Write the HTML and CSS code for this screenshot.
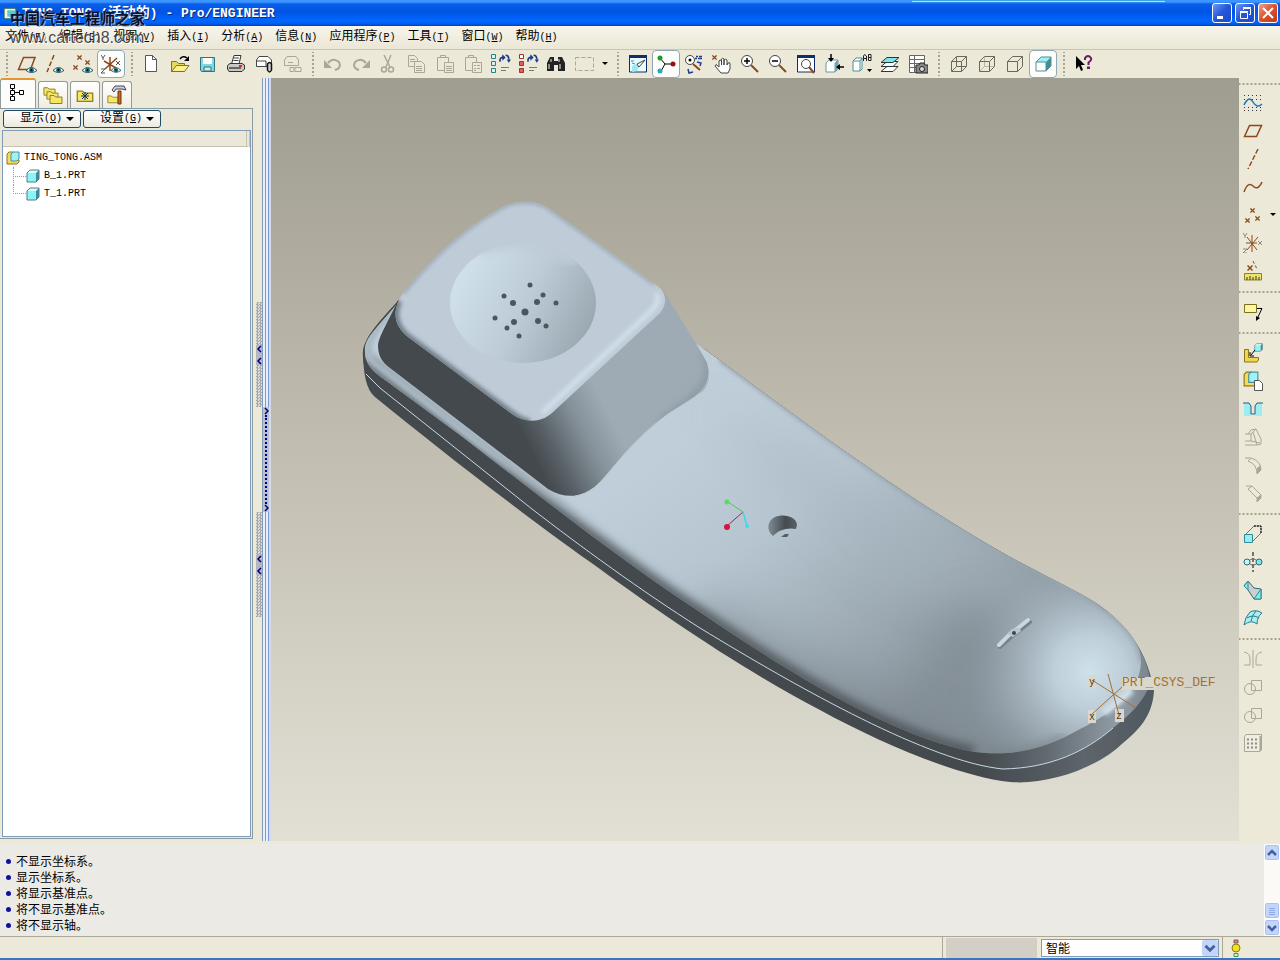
FILE: index.html
```html
<!DOCTYPE html>
<html lang="zh-CN">
<head>
    <meta charset="UTF-8">
    <meta name="viewport" content="width=device-width, initial-scale=1.0">
    <title>TING_TONG (活动的) - Pro/ENGINEER</title>
    <link rel="stylesheet" href="styles.css">
</head>
<body>
    <!-- shared icon parts -->
    <svg class="defs" width="0" height="0" aria-hidden="true">
        <symbol id="eye" viewBox="0 0 12 8"><path d="M0 4.500Q6-2 12 4.500Q6 9 0 4.500Z" fill="#f4f4ee" stroke="#1c4a55"/><circle cx="6" cy="4.200" r="2.600" fill="#167080"/><circle cx="6" cy="4" r="1" fill="#000"/></symbol>
        <symbol id="x" viewBox="0 0 6 6"><path d="M0.500 0.500L5.500 5.500M5.500 0.500L0.500 5.500" stroke="#8b4a1c" stroke-width="1.500"/></symbol>
        <symbol id="cube" viewBox="0 0 14 14"><path d="M1 4L4 1H13L10 4Z" fill="#d8ffff"/><path d="M10 4L13 1V10L10 13Z" fill="#3a8f9a"/><rect x="1" y="4" width="9" height="9" fill="#8ef4f8"/><path d="M1 4L4 1H13V10L10 13H1Z" fill="none" stroke="#4c7f8c"/></symbol>
        <symbol id="asm" viewBox="0 0 14 14"><path d="M1 3L3 1H7V9H13V11L11 13H1Z" fill="#f3dc5c" stroke="#8b7420"/><path d="M5 3L7 1H13V8L11 10H5Z" fill="#9df3f6" stroke="#4c8f9a"/></symbol>
        <symbol id="wire" viewBox="0 0 20 20"><path d="M2.500 7.500H12.500V17.500H2.500ZM2.500 7.500L7.500 2.500H17.500V12.500L12.500 17.500M12.500 7.500L17.500 2.500" fill="none" stroke="#6a675e"/></symbol>
        <symbol id="swap" viewBox="0 0 12 9"><path d="M2 7Q1 3 5 3M7 1Q10 1 10 5" fill="none" stroke="#173b80" stroke-width="1.500"/><path d="M4 0L7 3L4 6ZM8 5H12L10 8Z" fill="#173b80"/></symbol>
        <symbol id="folder" viewBox="0 0 14 11"><path d="M1 2.500H5L6.500 4H13V10.500H1Z" fill="#f5e66a" stroke="#8f7e25"/></symbol>
        <symbol id="clip" viewBox="0 0 20 20"><path d="M2.500 3.500H13.500V16.500H2.500ZM5.500 3.500V1.500H10.500V3.500" fill="none" stroke="#aaa799"/><path d="M9.500 8.500H18.500V18.500H9.500Z" fill="#ece9d8" stroke="#aaa799"/></symbol>
        <symbol id="bool" viewBox="0 0 20 20"><circle cx="7" cy="12" r="5.500" fill="none" stroke="#aaa799"/><path d="M8.500 3.500H18.500V13.500H8.500Z" fill="none" stroke="#aaa799"/></symbol>
    </svg>

    <header class="titlebar">
        <i class="edge-strip"></i>
        <svg class="app-icon" viewBox="0 0 14 14"><path d="M1 2H12V12H1Z" fill="#f4f4ec" stroke="#2c6a50"/><path d="M4 4H12V10H4Z" fill="#5ac8cc"/></svg>
        <h1><span class="lat">TING_TONG (</span>活动的<span class="lat">) - Pro/ENGINEER</span></h1>
        <div class="win-buttons">
            <button aria-label="最小化"><svg viewBox="0 0 18 18"><path d="M4 12H10V15H4Z" fill="#fff"/></svg></button>
            <button aria-label="还原"><svg viewBox="0 0 18 18" fill="none" stroke="#fff"><path d="M4 8.500H11.500V14.500H4.500V8M4 7.500H12M7.500 6V4.500H14.500V10.500H13M7 3.500H15"/></svg></button>
            <button class="close" aria-label="关闭"><svg viewBox="0 0 18 18"><path d="M4 4L14 14M14 4L4 14" stroke="#fff" stroke-width="2"/></svg></button>
        </div>
    </header>

    <div class="watermark">
        <p class="wm-name">中国汽车工程师之家</p>
        <p class="wm-url">www.cartech8.com</p>
    </div>

    <nav class="menubar">
        <a href="#">文件<span>(<u>F</u>)</span></a>
        <a href="#">编辑<span>(<u>E</u>)</span></a>
        <a href="#">视图<span>(<u>V</u>)</span></a>
        <a href="#">插入<span>(<u>I</u>)</span></a>
        <a href="#">分析<span>(<u>A</u>)</span></a>
        <a href="#">信息<span>(<u>N</u>)</span></a>
        <a href="#">应用程序<span>(<u>P</u>)</span></a>
        <a href="#">工具<span>(<u>T</u>)</span></a>
        <a href="#">窗口<span>(<u>W</u>)</span></a>
        <a href="#">帮助<span>(<u>H</u>)</span></a>
    </nav>

    <div class="toolbar">
        <i class="grip"></i>
        <button class="tool" aria-label="基准平面显示"><svg viewBox="0 0 20 20"><path d="M1.500 15.500L6.500 3.500H18L13.500 15.500Z" fill="none" stroke="#8b4a1c" stroke-width="1.500"/><use href="#eye" x="9" y="12" width="11" height="8"/></svg></button>
        <button class="tool" aria-label="基准轴显示"><svg viewBox="0 0 20 20"><path d="M9 1L2 18" stroke="#8b4a1c" stroke-width="1.500" stroke-dasharray="5 2"/><use href="#eye" x="8" y="12" width="11" height="8"/></svg></button>
        <button class="tool" aria-label="基准点显示"><svg viewBox="0 0 20 20"><use href="#x" x="4" y="1" width="5" height="5"/><use href="#x" x="0" y="11" width="5" height="5"/><use href="#x" x="12" y="6" width="5" height="5"/><use href="#eye" x="9" y="12" width="11" height="8"/></svg></button>
        <button class="tool on" aria-label="坐标系显示"><svg viewBox="0 0 20 20"><path d="M3 7L15 14M4 15L16 4M9 3V17" stroke="#8b4a1c" stroke-width="1.500"/><path d="M0 1L2 4L4 1M2 4V6M15 7L19 11M19 7L15 11M0 15H4L0 19H4" fill="none" stroke="#555"/><use href="#eye" x="10" y="12" width="10" height="8"/></svg></button>
        <i class="grip"></i>
        <button class="tool" aria-label="新建"><svg viewBox="0 0 20 20"><path d="M3.500 1.500H10.500L14.500 5.500V17.500H3.500Z" fill="#fff" stroke="#555"/><path d="M10.500 1.500V5.500H14.500" fill="none" stroke="#555"/></svg></button>
        <button class="tool" aria-label="打开"><svg viewBox="0 0 20 20"><path d="M1.500 17.500V7.500H6.500L8.500 9.500H14.500V17.500Z" fill="#e8d860" stroke="#7d7327"/><path d="M1.500 17.500L6.500 11.500H19L14.500 17.500Z" fill="#fbf28c" stroke="#7d7327"/><path d="M10 5Q13 1 17 4" fill="none" stroke="#000" stroke-width="1.500"/><path d="M19 2V7H14Z"/></svg></button>
        <button class="tool" aria-label="保存"><svg viewBox="0 0 20 20"><path d="M2.500 3.500H16.500V17.500H3.500L2.500 16Z" fill="#7adce2" stroke="#33737b"/><path d="M5 4H14V10H5Z" fill="#fff"/><path d="M6 13H13V17H6Z" fill="#d8e8e8" stroke="#33737b"/></svg></button>
        <button class="tool" aria-label="打印"><svg viewBox="0 0 20 20"><path d="M5.500 10L8 1.500H15L13 10Z" fill="#fff" stroke="#333"/><path d="M8 4H13M7.500 6.500H12.500" stroke="#444"/><path d="M1.500 11.500L4 9.500H16L18.500 11V15L16 17.500H3L1.500 15Z" fill="#c9c9c4" stroke="#333"/><path d="M3 14H15" stroke="#444" stroke-width="1.500"/><path d="M13 11H16V13H13Z" fill="#f02020"/></svg></button>
        <button class="tool" aria-label="附件发送"><svg viewBox="0 0 20 20"><path d="M2.500 12.500V6L5 2.500H14L17.500 6V12.500Z" fill="#fff" stroke="#444"/><path d="M3 7H12V12" fill="none" stroke="#444"/><path d="M13.500 16V10Q15.500 7 17.500 10V16Q15.500 20 13.500 16Z" fill="#ccc" stroke="#111" stroke-width="1.500"/></svg></button>
        <button class="tool" aria-label="链接发送"><svg viewBox="0 0 20 20" fill="none" stroke="#aaa799"><path d="M2.500 11.500V6L5 2.500H14L16.500 6V11.500H2.500M6 8.500H11M8 13.500H12V17.500H8ZM13 13.500H19V17.500H13Z"/></svg></button>
        <i class="grip"></i>
        <button class="tool" aria-label="撤消"><svg viewBox="0 0 20 20"><path d="M5 9Q10 3 16 8Q19 14 12 16" fill="none" stroke="#aaa799" stroke-width="2"/><path d="M1 6V14H9Z" fill="#aaa799"/></svg></button>
        <button class="tool" aria-label="重做"><svg viewBox="0 0 20 20"><path d="M15 9Q10 3 4 8Q1 14 8 16" fill="none" stroke="#aaa799" stroke-width="2"/><path d="M19 6V14H11Z" fill="#aaa799"/></svg></button>
        <button class="tool" aria-label="剪切"><svg viewBox="0 0 20 20" fill="none" stroke="#aaa799" stroke-width="1.500"><path d="M5 1L11 13M12 1L7 13"/><circle cx="5" cy="15.500" r="2.500"/><circle cx="12" cy="15.500" r="2.500"/></svg></button>
        <button class="tool" aria-label="复制"><svg viewBox="0 0 20 20" fill="#ece9d8" stroke="#aaa799"><path d="M1.500 1.500H7.500L10.500 4.500V12.500H1.500ZM3 5.500H8M3 7.500H8"/><path d="M7.500 7.500H14.500L17.500 10.500V18.500H7.500ZM9 12.500H15M9 14.500H15M9 16.500H15"/></svg></button>
        <button class="tool" aria-label="粘贴"><svg viewBox="0 0 20 20"><use href="#clip" width="20" height="20"/><path d="M11 12.500H17M11 14.500H17M11 16.500H17" stroke="#aaa799"/></svg></button>
        <button class="tool" aria-label="选择性粘贴"><svg viewBox="0 0 20 20"><use href="#clip" width="20" height="20"/><path d="M11 11.500H13M14 11.500H17M11 14.500H13M14 14.500H17M11 16.500H13" stroke="#aaa799"/></svg></button>
        <button class="tool" aria-label="再生"><svg viewBox="0 0 20 20"><g fill="#d6f4f4" stroke="#2c7f7f"><path d="M0.500 0.500H4.500V4.500H0.500ZM0.500 7.500H4.500V11.500H0.500ZM0.500 14.500H4.500V18.500H0.500Z"/></g><use href="#swap" x="7" y="0" width="13" height="10"/><path d="M10 13.500H18M10 16.500H15" stroke="#777"/></svg></button>
        <button class="tool" aria-label="再生管理器"><svg viewBox="0 0 20 20"><g fill="#e95a5a" stroke="#9a3434"><path d="M0.500 0.500H4.500V4.500H0.500Z" fill="#fff"/><path d="M0.500 7.500H4.500V11.500H0.500ZM0.500 14.500H4.500V18.500H0.500Z"/></g><use href="#swap" x="7" y="0" width="13" height="10"/><path d="M10 13.500H18M10 16.500H15" stroke="#777"/></svg></button>
        <button class="tool" aria-label="查找"><svg viewBox="0 0 20 20"><path d="M0 17V9L3 3H7V7H11V3H15L18 9V17H11V11H7V17Z" fill="#222"/><path d="M2 10V15M13 10V15M4 5V8M12 5V8" stroke="#aaa" stroke-width="1.500"/></svg></button>
        <button class="tool" aria-label="选取框"><svg viewBox="0 0 20 20"><path d="M0.500 3.500H18.500V16.500H0.500Z" fill="none" stroke="#aaa799" stroke-dasharray="4 2"/></svg></button>
        <button class="drop" aria-label="选取方式"><i class="arrow"></i></button>
        <i class="grip"></i>
        <button class="tool" aria-label="重画"><svg viewBox="0 0 20 20"><path d="M1.500 2H18.500V18H1.500Z" fill="#e8fbff" stroke="#102e6b"/><path d="M1 1H19V4H1Z" fill="#102e6b"/><path d="M4 12L9 10L11 13L9 17L4 18Z" fill="#9de8f0"/><path d="M9 10L17 6L11 13Z" fill="#fff" stroke="#444"/><path d="M4 9L7 10M3 7L6 7" stroke="#3a8fd0"/></svg></button>
        <button class="tool on" aria-label="旋转中心"><svg viewBox="0 0 20 20"><path d="M4 4L9 10H17M9 10L5 17" fill="none" stroke="#000"/><circle cx="4" cy="4" r="2.500" fill="#1c9a2e"/><circle cx="17" cy="10" r="2.500" fill="#8e1515"/><circle cx="4" cy="17" r="2.500" fill="#28a8c0"/></svg></button>
        <button class="tool" aria-label="定向模式"><svg viewBox="0 0 20 20"><circle cx="6" cy="6" r="4.500" fill="#fff" stroke="#444"/><path d="M9 10L16 16" stroke="#8b4a1c" stroke-width="2"/><circle cx="6" cy="6" r="1.500"/><path d="M12 2.500H14M15 2.500H18M11 4.500H13M14 4.500H18M13 8L17 9L16 12M4 15L5 19L9 18" fill="none" stroke="#1e3f94" stroke-width="1.500"/></svg></button>
        <button class="tool" aria-label="平移"><svg viewBox="0 0 20 20"><use href="#x" x="0" y="1" width="5" height="5"/><path d="M9 19L3 12L4 10.500L7 13V7Q8 5 9.500 7V11V5Q10.500 3.500 12 5V11V6Q13.500 4.500 15 6V11L16 9Q18 8 18 10V15L16 19Z" fill="#fff" stroke="#444"/></svg></button>
        <button class="tool" aria-label="放大"><svg viewBox="0 0 20 20"><path d="M11 11L18 18" stroke="#8b4a1c" stroke-width="2"/><circle cx="7" cy="7" r="5.500" fill="#fff" stroke="#444"/><path d="M4 7H10M7 4V10" stroke="#000" stroke-width="1.500"/></svg></button>
        <button class="tool" aria-label="缩小"><svg viewBox="0 0 20 20"><path d="M11 11L18 18" stroke="#8b4a1c" stroke-width="2"/><circle cx="7" cy="7" r="5.500" fill="#fff" stroke="#444"/><path d="M4 7H10" stroke="#000" stroke-width="1.500"/></svg></button>
        <button class="tool" aria-label="重新调整"><svg viewBox="0 0 20 20"><path d="M1.500 2H18.500V18H1.500Z" fill="#fff" stroke="#102e6b"/><path d="M1 1H19V4H1Z" fill="#102e6b"/><circle cx="10" cy="10" r="4.500" fill="#fff" stroke="#444"/><path d="M13 13L18 19" stroke="#8b4a1c" stroke-width="2"/></svg></button>
        <button class="tool" aria-label="重定向"><svg viewBox="0 0 20 20"><path d="M2 9L5 6H14L11 9V18H2ZM11 18L14 15V6" fill="#fff" stroke="#6a9aa2"/><path d="M11 9L14 6V15L11 18Z" fill="#5fb0b8"/><path d="M7 0V5M20 13H15" stroke="#000" stroke-width="1.500"/><path d="M4 4H10L7 8ZM16 10V16L12 13Z"/></svg></button>
        <button class="tool" aria-label="保存的视图列表"><svg viewBox="0 0 20 20"><path d="M1 7L4 4H10V15L8 17H1ZM8 17V7L10 4M1 7H8" fill="#fff" stroke="#4c8f9a"/><path d="M11.500 7V2L12.500 0.500L14.500 2V7M11.500 4.500H14.500M16.500 0.500V6.500H19V0.500H16.500M16.500 3.500H19" fill="none" stroke="#222"/><path d="M15 15H20L17.500 18Z"/></svg></button>
        <button class="tool" aria-label="层"><svg viewBox="0 0 20 20" stroke="#333"><path d="M1 17.500L7 12.500H18L13 17.500Z" fill="#fff"/><path d="M1 12.500L7 7.500H18L13 12.500Z" fill="#e8ffff"/><path d="M1 8.500L7 3.500H19L13 8.500Z" fill="#7ce8ee"/></svg></button>
        <button class="tool" aria-label="视图管理器"><svg viewBox="0 0 20 20"><path d="M1.500 1.500H16.500V18.500H1.500ZM6.500 1V19M1 5.500H17M1 9.500H17M1 13.500H8" fill="#fff" stroke="#666"/><path d="M8 11H11L12 9H16L17 11H20V19H8Z" fill="#888" stroke="#222"/><circle cx="14" cy="15" r="2.500" fill="#ddd" stroke="#222"/></svg></button>
        <i class="grip"></i>
        <button class="tool" aria-label="线框"><svg viewBox="0 0 20 20"><use href="#wire" width="20" height="20"/><path d="M7.500 3V12.500H17M7.500 12.500L3 17" fill="none" stroke="#6a675e"/></svg></button>
        <button class="tool" aria-label="隐藏线"><svg viewBox="0 0 20 20"><path d="M7.500 3V12.500H17M7.500 12.500L3 17" fill="none" stroke="#b9b6a8"/><use href="#wire" width="20" height="20"/></svg></button>
        <button class="tool" aria-label="无隐藏线"><svg viewBox="0 0 20 20"><use href="#wire" width="20" height="20"/></svg></button>
        <button class="tool on" aria-label="着色"><svg viewBox="0 0 20 20"><path d="M3 8L8 3H18L13 8Z" fill="#9ff0f2"/><path d="M13 8L18 3V12L13 17Z" fill="#3f8f97"/><path d="M3 8H13V17H3ZM3 8L8 3H18V12L13 17" fill="none" stroke="#568d96"/></svg></button>
        <i class="grip"></i>
        <button class="tool" aria-label="帮助"><svg viewBox="0 0 20 20"><path d="M2 2V15L5 12L7 17L9 16L7 11H11Z"/><path d="M11 6V4Q14 0 17 4Q18 6 14.500 8.500V11" fill="none" stroke="#6b1b66" stroke-width="2"/><path d="M13 12.500H16V15H13Z" fill="#6b1b66"/></svg></button>
    </div>

    <main class="workspace">
        <aside class="navigator">
            <div class="tabs">
                <button class="tab active" aria-label="模型树"><svg viewBox="0 0 20 20" fill="#fff" stroke="#000"><path d="M4.500 4V15M4.500 8.500H12"/><path d="M2.500 0.500H6.500V4.500H2.500ZM2.500 6.500H6.500V10.500H2.500ZM2.500 12.500H6.500V16.500H2.500ZM11.500 6.500H15.500V10.500H11.500Z"/></svg></button>
                <button class="tab" aria-label="文件夹浏览器"><svg viewBox="0 0 20 20"><use href="#folder" x="0" y="0" width="13" height="11"/><use href="#folder" x="3" y="4" width="13" height="11"/><use href="#folder" x="6" y="8" width="14" height="11"/></svg></button>
                <button class="tab" aria-label="收藏夹"><svg viewBox="0 0 20 20"><use href="#folder" x="1" y="2" width="18" height="16"/><path d="M10 7V15M6 11H14M7 8L13 14M13 8L7 14" stroke="#102e6b"/></svg></button>
                <button class="tab" aria-label="连接"><svg viewBox="0 0 20 20"><use href="#folder" x="0" y="8" width="12" height="11"/><path d="M5 5L8 1H17L19 5L15 4H9L7 7Z" fill="#c8d4dc" stroke="#445"/><path d="M11 6H14V19H11Z" fill="#c96a24" stroke="#6b3510"/></svg></button>
            </div>
            <div class="pane">
                <div class="pane-actions">
                    <button class="menu-btn">显示<span>(<u>O</u>)</span><i class="arrow"></i></button>
                    <button class="menu-btn">设置<span>(<u>G</u>)</span><i class="arrow"></i></button>
                </div>
                <div class="tree-box">
                    <div class="tree-head"></div>
                    <ul class="tree">
                        <li><svg viewBox="0 0 14 14"><use href="#asm"/></svg>TING_TONG.ASM</li>
                        <li class="child"><svg viewBox="0 0 14 14"><use href="#cube"/></svg>B_1.PRT</li>
                        <li class="child"><svg viewBox="0 0 14 14"><use href="#cube"/></svg>T_1.PRT</li>
                    </ul>
                </div>
            </div>
        </aside>

        <div class="sash">
            <div class="sash-left">
                <div class="sash-grip"><svg viewBox="0 0 6 20"><path d="M5 1L2 4L5 7M5 13L2 16L5 19" fill="none" stroke="#000080" stroke-width="1.500"/></svg></div>
                <div class="sash-grip"><svg viewBox="0 0 6 20"><path d="M5 1L2 4L5 7M5 13L2 16L5 19" fill="none" stroke="#000080" stroke-width="1.500"/></svg></div>
            </div>
            <div class="sash-right">
                <div class="sash-mid">
                    <svg viewBox="0 0 5 8"><path d="M1 1L4 4L1 7" fill="none" stroke="#000080" stroke-width="1.500"/></svg>
                    <i></i>
                    <svg viewBox="0 0 5 8"><path d="M1 1L4 4L1 7" fill="none" stroke="#000080" stroke-width="1.500"/></svg>
                </div>
            </div>
        </div>

        <section class="viewport">
            <svg class="model" viewBox="271 78 968 763" role="img" aria-label="TING_TONG">
                <defs>
                    <clipPath id="topClip"><path d="M365 352C364 340 372 333 398 303L520 240L703 348C760 390 812 429 872 470C920 503 965 532 1010 557L1079 593C1112 612 1141 636 1141 662C1139 700 1103 717 1065 737C1035 751 1008 756 975 752C900 738 810 687 700 612C620 560 540 496 460 435L385 380C370 370 365 362 365 352Z"/></clipPath>
                    <clipPath id="sideClip"><path d="M398 300C392 315 379 335 378 345C378 356 382 362 390 368L548 489C566 500 584 497 597 485C610 472 625 450 650 428C668 412 688 402 700 393C708 387 711 378 707 363C700 348 678 316 664 291L530 380Z"/></clipPath>
                    <clipPath id="capClip"><path d="M497 210C512 200 533 199 547 207L655 284C667 292 668 303 660 313L552 413C541 423 525 423 512 414L408 337C394 326 391 311 403 293C432 257 463 229 497 210Z"/></clipPath>
                    <linearGradient id="rim" gradientUnits="userSpaceOnUse" x1="980" y1="0" x2="1154" y2="0"><stop offset="0" stop-color="#43494d"/><stop offset="0.400" stop-color="#646c72"/><stop offset="0.800" stop-color="#929da6"/><stop offset="1" stop-color="#76818a"/></linearGradient>
                    <linearGradient id="lower" gradientUnits="userSpaceOnUse" x1="980" y1="0" x2="1154" y2="0"><stop offset="0" stop-color="#43494d"/><stop offset="0.600" stop-color="#5d646a"/><stop offset="1" stop-color="#505960"/></linearGradient>
                    <linearGradient id="body" gradientUnits="userSpaceOnUse" x1="740" y1="400" x2="940" y2="680"><stop offset="0" stop-color="#bfced9"/><stop offset="0.350" stop-color="#b6c5d0"/><stop offset="0.700" stop-color="#a0adb6"/><stop offset="1" stop-color="#8b969e"/></linearGradient>
                    <radialGradient id="tip" gradientUnits="userSpaceOnUse" cx="1090" cy="672" r="125"><stop offset="0" stop-color="#cfe1eb"/><stop offset="0.300" stop-color="#c0d1dc" stop-opacity="0.950"/><stop offset="0.650" stop-color="#a6b4be" stop-opacity="0.600"/><stop offset="1" stop-color="#8e9ba5" stop-opacity="0"/></radialGradient>
                    <linearGradient id="fillet" gradientUnits="userSpaceOnUse" x1="480" y1="440" x2="610" y2="540"><stop offset="0" stop-color="#a9b8c2"/><stop offset="1" stop-color="#b4c3ce" stop-opacity="0"/></linearGradient>
                    <linearGradient id="flank" gradientUnits="userSpaceOnUse" x1="532" y1="455" x2="610" y2="415"><stop offset="0" stop-color="#43494d"/><stop offset="0.250" stop-color="#596167"/><stop offset="0.650" stop-color="#86929a"/><stop offset="1" stop-color="#9eabb5"/></linearGradient>
                    <linearGradient id="dish" gradientUnits="userSpaceOnUse" x1="470" y1="265" x2="590" y2="325"><stop offset="0" stop-color="#cfdfe9"/><stop offset="0.500" stop-color="#bccbd5"/><stop offset="1" stop-color="#9ba9b3"/></linearGradient>
                    <linearGradient id="hole" x1="0" x2="1" y1="0" y2="0"><stop offset="0" stop-color="#7e8a92"/><stop offset="0.600" stop-color="#454c51"/><stop offset="1" stop-color="#596167"/></linearGradient>
                    <filter id="b2" x="-20%" y="-20%" width="140%" height="140%"><feGaussianBlur stdDeviation="2"/></filter>
                    <filter id="b5" x="-20%" y="-20%" width="140%" height="140%"><feGaussianBlur stdDeviation="5"/></filter>
                    <filter id="b20" x="-100%" y="-100%" width="300%" height="300%"><feGaussianBlur stdDeviation="20"/></filter>
                </defs>

                <!-- lower shell -->
                <path d="M363 357C362 343 370 331 398 301L703 348C760 390 812 429 872 470C920 503 965 532 1010 557L1079 593C1120 615 1145 643 1154 690C1153 712 1143 727 1123 743C1095 770 1045 785 1010 782C960 777 880 743 820 710C740 668 660 613 600 569C530 520 440 450 375 397C366 389 364 375 363 357Z" fill="url(#lower)"/>
                <!-- upper shell side -->
                <path d="M363 357C362 343 370 331 398 301L703 348C760 390 812 429 872 470C920 503 965 532 1010 557L1079 593C1120 615 1143 643 1150 678C1152 690 1135 712 1113 728C1085 752 1050 768 1003 769C930 762 800 689 700 628C640 590 580 546 532 509L380 388C367 378 364 370 363 357Z" fill="url(#rim)"/>
                <g clip-path="url(#topClip)">
                    <path d="M355 290H1200V800H355Z" fill="url(#body)"/>
                    <path d="M700 400L1000 560L1120 620L1070 650L880 580Z" fill="#a6b4be" opacity="0.400" filter="url(#b20)"/>
                    <ellipse cx="955" cy="680" rx="35" ry="85" transform="rotate(20 955 680)" fill="#828d95" opacity="0.600" filter="url(#b20)"/>
                    <path d="M700 612C810 687 900 738 975 752C1008 756 1035 751 1060 740" fill="none" stroke="#6e787f" stroke-width="30" opacity="0.500" filter="url(#b20)"/>
                    <ellipse cx="1085" cy="670" rx="125" ry="110" fill="url(#tip)"/>
                    <path d="M365 360L460 435C540 496 620 560 700 612C810 687 900 738 975 752" fill="none" stroke="#50575c" stroke-width="11" filter="url(#b5)"/>
                    <path d="M975 752C1008 756 1035 751 1065 737" fill="none" stroke="#77828a" stroke-width="5" filter="url(#b5)"/>
                    <path d="M1079 593C1112 612 1141 636 1141 662" fill="none" stroke="#97a5ae" stroke-width="4" filter="url(#b2)"/>
                    <path d="M720 360C812 429 872 470 920 503L1079 593" fill="none" stroke="#98a6b0" stroke-width="4" filter="url(#b2)"/>
                    <path d="M396 305C370 334 360 350 374 363L460 429Q520 475 560 503L610 538" fill="none" stroke="url(#fillet)" stroke-width="8" filter="url(#b2)"/>
                </g>
                <path d="M1104 713L1132 690" stroke="#cfe0ea" stroke-width="7" filter="url(#b2)"/>
                <path d="M366 374L380 388L532 509C580 546 640 590 700 628C800 689 930 762 1003 769C1050 768 1085 752 1113 728" fill="none" stroke="#c9d8e2"/>

                <!-- earpiece block -->
                <g clip-path="url(#sideClip)">
                    <path d="M370 280H720V510H370Z" fill="url(#flank)"/>
                    <path d="M705 350C717 380 705 393 660 423" fill="none" stroke="#84919a" stroke-width="6" filter="url(#b5)"/>
                </g>
                <path d="M572 497C590 494 600 484 612 469C630 446 650 428 668 414C690 400 708 392 709 374" fill="none" stroke="#b9c8d2"/>
                <g clip-path="url(#capClip)">
                    <path d="M380 190H680V430H380Z" fill="#bfccd8"/>
                    <path d="M399 301C393 311 394 326 408 337L512 414C520 420 526 422 530 422" fill="none" stroke="#6f7b84" stroke-width="7" filter="url(#b2)"/>
                    <path d="M403 293C432 257 463 229 497 210C512 200 533 199 547 207L655 284" fill="none" stroke="#8f9ca5" stroke-width="3" filter="url(#b2)"/>
                    <path d="M542 413L652 310Q661 301 656 293" fill="none" stroke="#d4e4ee" stroke-width="4" filter="url(#b2)"/>
                </g>
                <ellipse cx="523" cy="303" rx="73" ry="60" fill="url(#dish)"/>
                <path d="M480 250Q530 232 575 262" fill="none" stroke="#bfccd8" stroke-width="12" filter="url(#b5)"/>
                <g fill="#4d565c">
                    <circle cx="530" cy="285" r="2.500"/><circle cx="543" cy="295" r="2.500"/><circle cx="504" cy="296" r="2.500"/><circle cx="513" cy="303" r="3"/><circle cx="537" cy="302" r="3"/><circle cx="556" cy="303" r="2.500"/><circle cx="525" cy="312" r="3.500"/><circle cx="495" cy="318" r="2.500"/><circle cx="514" cy="322" r="3"/><circle cx="538" cy="321" r="3"/><circle cx="546" cy="326" r="2.500"/><circle cx="507" cy="328" r="2.500"/><circle cx="519" cy="336" r="2.500"/>
                </g>

                <!-- screw hole and microphone slot -->
                <path d="M773 536C766 530 767 521 775 517C784 513 797 517 797 525L796 529C788 527 778 530 773 536Z" fill="url(#hole)"/>
                <path d="M781 537L785 534L789 534L787 537Z" fill="#555e64"/>
                <path d="M1000 647L1011 637L1019 631L1030 622" fill="none" stroke="#76818a" stroke-width="4" stroke-linecap="round"/>
                <path d="M999 645L1010 634L1017 629L1028 620" fill="none" stroke="#c9d7e0" stroke-width="4" stroke-linecap="round"/>
                <path d="M1007 634L1012 629L1020 628L1021 631L1013 637Z" fill="#b9c7d0"/>
                <circle cx="1014" cy="633" r="2" fill="#3e464b"/>

                <!-- spin centre -->
                <path d="M743 512L728 502" stroke="#56c456"/><path d="M743 512L727 526" stroke="#a02848"/><path d="M743 512L747 526" stroke="#42d4e4" stroke-width="1.500"/>
                <circle cx="727" cy="502" r="2.500" fill="#55e055"/><circle cx="727" cy="527" r="3" fill="#cf1740"/><circle cx="747" cy="526" r="2" fill="#40dcec"/>

                <!-- coordinate system -->
                <g fill="#dad8cc"><path d="M1122 677H1156V690H1122Z"/><path d="M1088 675H1096V688H1088ZM1088 710H1096V723H1088ZM1115 709H1124V722H1115Z"/></g>
                <path d="M1092 680L1136 708M1091 715L1122 687M1108 674L1119 715" stroke="#a5702f"/>
                <g class="csys"><text x="1122" y="686">PRT_CSYS_DEF</text><g class="axis"><text x="1089" y="685">y</text><text x="1089" y="720">x</text><text x="1116" y="719">z</text></g></g>
            </svg>
        </section>

        <div class="side-tools">
            <i class="grip-h"></i>
            <button class="tool" aria-label="草绘"><svg viewBox="0 0 20 20"><path d="M1 2.500H19M1 6.500H19M1 17.500H19M1 14.500H19" stroke="#334" stroke-dasharray="1 3"/><path d="M1 12Q6 2 10 9T19 11" fill="none" stroke="#1a74c0" stroke-width="1.500"/></svg></button>
            <button class="tool" aria-label="平面"><svg viewBox="0 0 20 20"><path d="M1.500 15.500L6.500 4.500H18.500L13.500 15.500Z" fill="none" stroke="#8b4a1c" stroke-width="1.500"/></svg></button>
            <button class="tool" aria-label="轴"><svg viewBox="0 0 20 20"><path d="M15 0L5 20" stroke="#8b4a1c" stroke-width="1.500" stroke-dasharray="5 2"/></svg></button>
            <button class="tool" aria-label="曲线"><svg viewBox="0 0 20 20"><path d="M1 15Q5 4 10 9T19 5" fill="none" stroke="#8b4a1c" stroke-width="1.500"/></svg></button>
            <div class="tool-pair">
                <button class="tool" aria-label="点"><svg viewBox="0 0 20 20"><use href="#x" x="7" y="3" width="5" height="5"/><use href="#x" x="2" y="13" width="5" height="5"/><use href="#x" x="12" y="11" width="5" height="5"/></svg></button>
                <button class="drop" aria-label="点类型"><i class="arrow"></i></button>
            </div>
            <button class="tool" aria-label="坐标系"><svg viewBox="0 0 20 20"><path d="M9 2V19M4 4L14 17M4 17L15 4M3 10H14" stroke="#8b4a1c"/><path d="M0 0L2 3L4 0M2 3V5M15 8L19 12M19 8L15 12M0 16H4L0 20H4" fill="none" stroke="#888"/></svg></button>
            <button class="tool" aria-label="分析特征"><svg viewBox="0 0 20 20"><use href="#x" x="4" y="4" width="6" height="6"/><path d="M10 0L14 8" stroke="#8b4a1c" stroke-dasharray="3 2"/><path d="M1.500 12.500H18.500V19H1.500Z" fill="#ede36a" stroke="#8b8030"/><path d="M4 19V16M7 19V15M10 19V16M13 19V15M16 19V16" stroke="#443c10"/></svg></button>
            <i class="grip-h"></i>
            <button class="tool" aria-label="注释"><svg viewBox="0 0 20 20"><path d="M1.500 2.500H13.500V10.500H1.500Z" fill="#fbf7a0" stroke="#777020"/><path d="M14 6.500H19L14 17" fill="none" stroke="#000"/><path d="M13 14V19L17 16Z"/></svg></button>
            <i class="grip-h"></i>
            <button class="tool" aria-label="装配"><svg viewBox="0 0 20 20"><path d="M1.500 6.500H5.500V14.500H15.500V17L14 19H1.500Z" fill="#f0d64e" stroke="#8b7420"/><use href="#cube" x="11" y="0" width="9" height="9"/><path d="M12 7L8 12M7 9V13H11" fill="none" stroke="#000"/></svg></button>
            <button class="tool" aria-label="创建元件"><svg viewBox="0 0 20 20"><use href="#asm" x="0" y="0" width="16" height="16"/><path d="M11.500 9.500H16.500L19.500 12.500V19.500H11.500Z" fill="#fff" stroke="#555"/></svg></button>
            <button class="tool" aria-label="孔"><svg viewBox="0 0 20 20"><path d="M1 4H6L8 7V17H1ZM19 4H14L12 7V17H19Z" fill="#9cecf2"/><path d="M0 4H6L8 7V15H12V7L14 4H20" fill="none" stroke="#2a5a80"/></svg></button>
            <button class="tool" aria-label="壳"><svg viewBox="0 0 20 20" fill="none" stroke="#aaa799"><path d="M8 3L13 2L18 12V17L14 18H2M2 7H8V14H2M8 7L13 2M8 14L17 16M10 5L14 18M8 3L5 7"/></svg></button>
            <button class="tool" aria-label="倒圆角"><svg viewBox="0 0 20 20"><path d="M2 3H8Q18 6 18 15L14 19Q14 9 5 6M8 3L5 6" fill="none" stroke="#aaa799"/><path d="M14 13L18 10V15L14 19Z" fill="#aaa799"/></svg></button>
            <button class="tool" aria-label="倒角"><svg viewBox="0 0 20 20"><path d="M3 3H9L18 12V15L14 19V15L5 6M9 3L5 6M18 12L14 15" fill="none" stroke="#aaa799"/><path d="M14 15L18 12V15L14 19Z" fill="#aaa799"/></svg></button>
            <i class="grip-h"></i>
            <button class="tool" aria-label="拉伸"><svg viewBox="0 0 20 20"><path d="M2 11L11 2H18V9L9 18" fill="none" stroke="#6a7a80"/><path d="M1.500 10.500H9.500V18.500H1.500Z" fill="#96eef2" stroke="#2f8b95"/><path d="M11 2H18V9" fill="none" stroke="#000" stroke-dasharray="2 1"/></svg></button>
            <button class="tool" aria-label="旋转"><svg viewBox="0 0 20 20"><path d="M10 0V20" stroke="#000" stroke-dasharray="4 2"/><circle cx="4" cy="10" r="3" fill="#c4f6f8" stroke="#367"/><circle cx="16" cy="10" r="3" fill="#7ce6e4" stroke="#367"/><path d="M7 8Q10 5 13 8M7 12Q10 15 13 12" fill="none" stroke="#667"/></svg></button>
            <button class="tool" aria-label="可变剖面扫描"><svg viewBox="0 0 20 20"><path d="M5 1L11 8L18 9V19H11L5 10L1 6Z" fill="#c9d0d0" stroke="#367"/><path d="M5 1L1 6L5 10ZM11 19L18 9V19Z" fill="#86e8ec" stroke="#2f8b95"/></svg></button>
            <button class="tool" aria-label="边界混合"><svg viewBox="0 0 20 20"><path d="M1 17Q2 9 7 4Q13 1 19 5Q14 9 14 16Q8 11 1 17Z" fill="#a8f0f4" stroke="#2f7b88"/><path d="M4 10Q10 6 16 10M8 13Q9 7 13 3" fill="none" stroke="#2f7b88"/></svg></button>
            <i class="grip-h"></i>
            <button class="tool" aria-label="镜像"><svg viewBox="0 0 20 20" fill="none" stroke="#aaa799"><path d="M10 1V19M1 3Q7 4 7 10V16H1M19 3Q13 4 13 10V16H19"/></svg></button>
            <button class="tool" aria-label="合并"><svg viewBox="0 0 20 20"><use href="#bool" width="20" height="20"/></svg></button>
            <button class="tool" aria-label="修剪"><svg viewBox="0 0 20 20"><use href="#bool" width="20" height="20"/></svg></button>
            <button class="tool" aria-label="阵列"><svg viewBox="0 0 20 20"><path d="M1.500 3.500L3 1.500H18.500V16L17 18.500H1.500Z" fill="#efede2" stroke="#aaa799"/><path d="M17.500 3V18" stroke="#aaa799" stroke-width="2"/><path d="M4 6.500H15M4 10.500H15M4 14.500H15" stroke="#8f8c80" stroke-width="2" stroke-dasharray="2 2"/></svg></button>
        </div>
    </main>

    <section class="messages">
        <ul>
            <li>不显示坐标系。</li>
            <li>显示坐标系。</li>
            <li>将显示基准点。</li>
            <li>将不显示基准点。</li>
            <li>将不显示轴。</li>
        </ul>
        <div class="scrollbar">
            <button aria-label="向上"><svg viewBox="0 0 14 14"><path d="M3 9L7 5L11 9" fill="none" stroke="#44639e" stroke-width="2.500"/></svg></button>
            <div class="track"></div>
            <div class="thumb"><svg viewBox="0 0 14 14"><path d="M4 4.500H10M4 6.500H10M4 8.500H10M4 10.500H10" stroke="#8ca9e8"/></svg></div>
            <button aria-label="向下"><svg viewBox="0 0 14 14"><path d="M3 5L7 9L11 5" fill="none" stroke="#44639e" stroke-width="2.500"/></svg></button>
        </div>
    </section>

    <footer class="statusbar">
        <div class="status-text"></div>
        <div class="status-count"></div>
        <div class="filter">
            <select aria-label="选取过滤器"><option>智能</option></select>
            <svg viewBox="0 0 14 14"><path d="M3 5L7 9L11 5" fill="none" stroke="#44639e" stroke-width="2.500"/></svg>
        </div>
        <div class="light">
            <svg viewBox="0 0 12 18"><path d="M4 1H8V4H4Z" fill="#c98f8f" stroke="#8c5858"/><circle cx="6" cy="9" r="4" fill="#f2df28" stroke="#8b7a14"/><path d="M4 14.500H8V17.500H4Z" fill="#d8f0d8" stroke="#3a9a4a"/></svg>
        </div>
    </footer>
</body>
</html>
```

FILE: styles.css
```css
* {
    margin: 0;
    padding: 0;
    box-sizing: border-box;
}

body {
    display: flex;
    flex-direction: column;
    height: 100vh;
    overflow: hidden;
    background: #ece9d8;
    color: #000;
    font-family: "Liberation Mono", "Noto Sans CJK SC", monospace;
    font-size: 12px;
    line-height: 16px;
}

button {
    border: none;
    background: none;
    font: inherit;
    color: inherit;
}

svg {
    display: block;
}

.defs {
    position: absolute;
}

/* title bar */
.titlebar {
    position: relative;
    display: flex;
    align-items: center;
    flex: none;
    height: 26px;
    padding: 0 2px 0 3px;
    background: linear-gradient(#3d95ff 0, #3d95ff 2px, #0a5ee8 4px, #0054e3 12px, #0066ff 20px, #0062f5 23px, #0040c0 26px);
    color: #fff;
}

.edge-strip {
    position: absolute;
    top: 0;
    right: 115px;
    width: 253px;
    height: 2px;
    border-bottom: 1px solid #a8e4f4;
    background: #38a8dc;
}

.app-icon {
    width: 15px;
    height: 15px;
}

.titlebar h1 {
    flex: 1;
    margin-left: 4px;
    font-size: 14px;
    font-weight: bold;
    text-shadow: 1px 1px #0a2a80;
}

.lat {
    font-size: 13px;
    white-space: pre;
}

.win-buttons {
    display: flex;
    gap: 3px;
}

.win-buttons button {
    width: 20px;
    height: 20px;
    border: 1px solid #fff;
    border-radius: 3px;
    background: linear-gradient(135deg, #6f97ef, #2356d8 50%, #1a4cc8);
}

.win-buttons .close {
    background: linear-gradient(135deg, #f0a088, #dc4f2c 50%, #c03c18);
}

.win-buttons svg {
    width: 18px;
    height: 18px;
}

/* site mark laid over the title and menu */
.watermark {
    position: absolute;
    top: 8px;
    left: 10px;
    z-index: 2;
    pointer-events: none;
}

.wm-name {
    font-family: "Noto Sans CJK SC", sans-serif;
    font-size: 15px;
    font-weight: bold;
    line-height: 20px;
    color: #08122c;
    text-shadow: 1px 1px #9db4d8, -1px 0 #4a78c0;
}

.wm-url {
    font-family: "Liberation Sans", sans-serif;
    font-size: 16px;
    line-height: 20px;
    color: #4a4a4a;
    text-shadow: 1px 1px #fff;
}

/* menu */
.menubar {
    display: flex;
    gap: 12px;
    flex: none;
    height: 24px;
    padding: 3px 5px;
    border-bottom: 1px solid #c9c5b3;
    background: linear-gradient(#f7f5ec, #ebe7d6);
}

.menubar a {
    color: #000;
    text-decoration: none;
}

.menubar span,
.menu-btn span {
    font-size: 10px;
}

/* toolbars */
.toolbar {
    display: flex;
    align-items: center;
    flex: none;
    height: 28px;
}

.grip {
    width: 13px;
    height: 24px;
    background: radial-gradient(circle, #a5a294 1px, transparent 1px) center / 4px 4px repeat-y;
}

.grip-h {
    display: block;
    flex: none;
    width: 41px;
    height: 13px;
    background: radial-gradient(circle, #a5a294 1px, transparent 1px) center / 4px 4px repeat-x;
}

.grip-h:first-child {
    height: 11px;
}

.tool {
    display: flex;
    align-items: center;
    justify-content: center;
    flex: none;
    width: 28px;
    height: 28px;
}

.tool svg {
    width: 20px;
    height: 20px;
}

.tool.on {
    border: 1px solid #8fa9b5;
    border-radius: 4px;
    background: #fdfdfb;
}

.drop {
    width: 12px;
    height: 28px;
}

.arrow {
    display: inline-block;
    border: 4px solid transparent;
    border-top-color: #000;
    border-bottom: none;
}

.drop .arrow {
    border-width: 3px 3px 0;
    vertical-align: middle;
}

/* model tree */
.workspace {
    display: flex;
    flex: 1;
    min-height: 0;
}

.navigator {
    display: flex;
    flex-direction: column;
    width: 253px;
    padding-bottom: 2px;
}

.tabs {
    display: flex;
    align-items: flex-end;
    gap: 2px;
    height: 30px;
}

.tab {
    display: flex;
    align-items: center;
    justify-content: center;
    width: 30px;
    height: 27px;
    border: 1px solid #919b9c;
    border-bottom: none;
    border-radius: 3px 3px 0 0;
    background: linear-gradient(#fff, #efece0);
}

.tab.active {
    width: 36px;
    height: 30px;
    border-top: 2px solid #e5952c;
    background: #fcfcfa;
}

.tab svg {
    width: 20px;
    height: 20px;
}

.pane {
    display: flex;
    flex-direction: column;
    flex: 1;
    border: 1px solid #8a9ba2;
    border-left: none;
}

.pane-actions {
    display: flex;
    gap: 2px;
    padding: 1px 3px;
}

.menu-btn {
    display: flex;
    align-items: center;
    justify-content: center;
    width: 78px;
    height: 18px;
    padding-left: 10px;
    border: 1px solid #1f4a66;
    border-radius: 3px;
    background: linear-gradient(#fff, #eceadf);
}

.menu-btn .arrow {
    margin-left: 4px;
}

.tree-box {
    flex: 1;
    margin: 1px 1px 1px 2px;
    border: 1px solid #7f9db9;
    background: #fff;
}

.tree-head {
    height: 16px;
    border-right: 4px double #c5c2b2;
    border-bottom: 1px solid #c5c2b2;
    background: #ebe8d9;
}

.tree {
    padding: 2px 3px;
    list-style: none;
    font-size: 10px;
}

.tree li {
    display: flex;
    align-items: center;
    gap: 4px;
    height: 18px;
}

.tree svg {
    width: 14px;
    height: 14px;
}

.tree .child::before {
    content: "";
    width: 12px;
    height: 18px;
    margin-left: 7px;
    margin-right: -4px;
    border-left: 1px dotted #999;
    background: linear-gradient(90deg, #999 50%, transparent 50%) center / 2px 1px repeat-x;
}

.tree .child:last-child::before {
    height: 9px;
    align-self: flex-start;
    background-position: bottom;
}

/* splitter */
.sash {
    display: flex;
    width: 18px;
}

.sash-left {
    display: flex;
    flex-direction: column;
    align-items: flex-end;
    justify-content: center;
    gap: 105px;
    width: 10px;
    border-right: 1px solid #7f9db9;
}

.sash-grip {
    display: flex;
    align-items: center;
    width: 6px;
    height: 105px;
    background: repeating-conic-gradient(#a9a9a9 0 25%, #dcdcd8 0 50%) 0 0 / 3px 3px;
}

.sash-grip svg {
    width: 6px;
    height: 20px;
    background: #b6b6c0;
}

.sash-right {
    display: flex;
    align-items: center;
    width: 8px;
    background: linear-gradient(90deg, #e8eefa 2px, #7d9ad0 2px, #7d9ad0 3px, #e8eefa 3px, #e8eefa 5px, #7d9ad0 5px, #7d9ad0 6px, #d4dcea 6px);
}

.sash-mid {
    display: flex;
    flex-direction: column;
    justify-content: space-between;
    align-items: center;
    width: 6px;
    height: 105px;
    background: #bcbfcc;
}

.sash-mid i {
    flex: 1;
    border-left: 2px dotted #000080;
}

.sash-mid svg {
    width: 5px;
    height: 8px;
}

/* graphics window */
.viewport {
    flex: 1;
    min-width: 0;
    background: linear-gradient(#9f9c90, #c2beb1 50%, #e2e0d5);
}

.model {
    width: 100%;
    height: 100%;
}

.csys {
    fill: #a5702f;
    font-size: 13px;
}

.axis {
    fill: #4a3a20;
    font-size: 10px;
}

.side-tools {
    width: 41px;
    overflow: hidden;
}

.tool-pair {
    display: flex;
}

/* message log */
.messages {
    display: flex;
    flex: none;
    justify-content: space-between;
    height: 96px;
    border-top: 3px solid #ece9d8;
    border-bottom: 1px solid #aca899;
    background: #ebeae4;
}

.messages ul {
    padding: 9px 6px;
    list-style: none;
}

.messages li {
    display: flex;
    align-items: center;
    gap: 5px;
    font-family: "Noto Sans CJK SC", sans-serif;
}

.messages li::before {
    content: "";
    width: 5px;
    height: 5px;
    border-radius: 50%;
    background: #10109c;
}

.scrollbar {
    display: flex;
    flex-direction: column;
    width: 16px;
    background: #fbfaf6;
}

.scrollbar button,
.thumb {
    display: flex;
    align-items: center;
    justify-content: center;
    flex: none;
    height: 17px;
    border: 1px solid #fff;
    border-radius: 3px;
    background: #c4d5fb;
    box-shadow: inset 0 0 0 1px #a9c0ec;
}

.scrollbar svg {
    width: 14px;
    height: 14px;
}

.track {
    flex: 1;
}

/* status bar */
.statusbar {
    display: flex;
    flex: none;
    height: 23px;
    border-bottom: 2px solid #3b74c4;
}

.status-text {
    flex: 1;
    border-right: 1px solid #aca899;
}

.status-count {
    width: 91px;
    margin: 1px 4px 0 3px;
    background: #d3cfc7;
}

.filter {
    position: relative;
    width: 178px;
    padding: 2px 0 1px;
}

.filter select {
    width: 100%;
    height: 18px;
    padding-left: 4px;
    border: 1px solid #7f9db9;
    background: #fff;
    appearance: none;
    color: #000;
    font-family: "Noto Sans CJK SC", sans-serif;
    font-size: 12px;
    line-height: 16px;
}

.filter svg {
    position: absolute;
    top: 3px;
    right: 1px;
    width: 16px;
    height: 16px;
    border-radius: 2px;
    background: #c4d5fb;
    pointer-events: none;
}

.light {
    width: 58px;
    margin-left: 3px;
    padding: 2px 7px;
    border-left: 1px solid #aca899;
}

.light svg {
    width: 12px;
    height: 18px;
}
```
